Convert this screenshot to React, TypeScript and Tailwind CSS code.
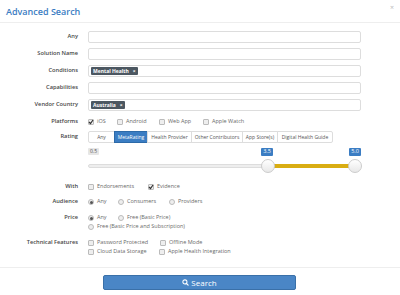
import React from "react";

const Label = ({ children }: { children: React.ReactNode }) => (
  <div className="w-[78px] shrink-0 text-right font-semibold text-[#474747] text-[5.7px]">{children}</div>
);

const Check = ({ checked = false }: { checked?: boolean }) => (
  <span className="relative inline-block w-[6px] h-[6px] border border-[#bbb] bg-[#eee] rounded-[1px] shrink-0">
    {checked && (
      <svg viewBox="0 0 6 6" className="absolute left-[-1px] top-[-1px] w-[6px] h-[6px]">
        <path d="M1 3 L2.5 4.5 L5 1" stroke="#333" strokeWidth="1.2" fill="none" />
      </svg>
    )}
  </span>
);

const Radio = ({ checked = false }: { checked?: boolean }) => (
  <span className="inline-flex items-center justify-center w-[6px] h-[6px] rounded-full border border-[#bbb] bg-[#eee] shrink-0">
    {checked && <span className="w-[3px] h-[3px] rounded-full bg-[#555]" />}
  </span>
);

const Opt = ({ children, w, box }: { children: React.ReactNode; w?: string; box: React.ReactNode }) => (
  <div className={`flex items-center gap-[3px] ${w ?? ""}`}>
    {box}
    <span className="text-[#6a6a6a]">{children}</span>
  </div>
);

const Input = ({ children }: { children?: React.ReactNode }) => (
  <div className="w-[273px] h-[12px] border border-[#ddd] rounded-[2px] bg-white flex items-center px-[2px]">
    {children}
  </div>
);

const Tag = ({ children }: { children: React.ReactNode }) => (
  <span className="inline-flex items-center h-[8px] px-[2px] bg-[#4c5761] text-white font-bold text-[5px] rounded-[1px] gap-[4px]">
    {children}
    <span className="text-[5px]">×</span>
  </span>
);

export default function App() {
  return (
    <div
      className="relative w-[400px] h-[295px] bg-white text-[5.5px] leading-none overflow-hidden"
      style={{ fontFamily: '"Open Sans", sans-serif' }}
    >
      <div className="h-[23px] border-b border-[#eee] flex items-center justify-between pl-[6px] pr-[6px]">
        <div className="text-[9px] font-semibold text-[#3a7cc2]">Advanced Search</div>
        <div className="self-start mt-[4px] text-[7px] text-[#bbb]">×</div>
      </div>
      <div className="pt-[8px] flex flex-col">
        {["Any", "Solution Name"].map((l) => (
          <div key={l} className="flex items-center gap-[10px] h-[12px] mb-[5px]">
            <Label>{l}</Label>
            <Input />
          </div>
        ))}
        <div className="flex items-center gap-[10px] h-[12px] mb-[5px]">
          <Label>Conditions</Label>
          <Input>
            <Tag>Mental Health</Tag>
          </Input>
        </div>
        <div className="flex items-center gap-[10px] h-[12px] mb-[5px]">
          <Label>Capabilities</Label>
          <Input />
        </div>
        <div className="flex items-center gap-[10px] h-[12px] mb-[5px]">
          <Label>Vendor Country</Label>
          <Input>
            <Tag>Australia</Tag>
          </Input>
        </div>
        <div className="flex items-center gap-[10px] h-[12px] mb-[3px]">
          <Label>Platforms</Label>
          <div className="flex items-center">
            <Opt w="w-[29px]" box={<Check checked />}>iOS</Opt>
            <Opt w="w-[42px]" box={<Check />}>Android</Opt>
            <Opt w="w-[44px]" box={<Check />}>Web App</Opt>
            <Opt box={<Check />}>Apple Watch</Opt>
          </div>
        </div>
        <div className="flex items-center gap-[10px] h-[12px]">
          <Label>Rating</Label>
          <div className="flex h-[12px] text-[5px] text-[#555]">
            {[
              ["Any", "w-[27px]"],
              ["MetaRating", "w-[34px]"],
              ["Health Provider", "w-[45px]"],
              ["Other Contributors", "w-[52px]"],
              ["App Store(s)", "w-[36px]"],
              ["Digital Health Guide", "w-[56px]"],
            ].map(([t, w], i) => (
              <div
                key={t}
                className={`${w} flex items-center justify-center border ${
                  i === 1 ? "bg-[#3b7dc3] border-[#2d6aa8] text-white" : "border-[#ddd] bg-white"
                } ${i > 0 ? "-ml-px" : ""} ${i === 0 ? "rounded-l-[2px]" : ""} ${i === 5 ? "rounded-r-[2px]" : ""}`}
              >
                {t}
              </div>
            ))}
          </div>
        </div>
        <div className="flex gap-[10px] h-[28px] mt-[5px]">
          <div className="w-[78px] shrink-0" />
          <div className="relative w-[273px] h-[28px]">
            <div className="absolute left-0 top-0 h-[7px] px-[2px] bg-[#e6e6e6] text-[#555] text-[5px] flex items-center rounded-[1px]">0.5</div>
            <div className="absolute left-[173px] top-0 h-[8px] w-[12px] bg-[#3b7dc3] text-white text-[5.5px] flex items-center justify-center rounded-[1px]">3.5</div>
            <div className="absolute left-[261px] top-0 h-[8px] w-[12px] bg-[#3b7dc3] text-white text-[5.5px] flex items-center justify-center rounded-[1px]">5.0</div>
            <div className="absolute left-0 right-0 top-[16px] h-[4px] rounded-full bg-[#eee] border border-[#ddd]" />
            <div className="absolute left-[180px] w-[87px] top-[16px] h-[4px] bg-[#d9ad12]" />
            <div className="absolute left-[173px] top-[11px] w-[14px] h-[14px] rounded-full bg-gradient-to-b from-white to-[#e8e8e8] border border-[#ccc]" />
            <div className="absolute left-[260px] top-[11px] w-[14px] h-[14px] rounded-full bg-gradient-to-b from-white to-[#e8e8e8] border border-[#ccc]" />
          </div>
        </div>
        <div className="flex items-center gap-[10px] h-[8px] mt-[7px]">
          <Label>With</Label>
          <div className="flex items-center">
            <Opt w="w-[60px]" box={<Check />}>Endorsements</Opt>
            <Opt box={<Check checked />}>Evidence</Opt>
          </div>
        </div>
        <div className="flex items-center gap-[10px] h-[8px] mt-[7px]">
          <Label>Audience</Label>
          <div className="flex items-center">
            <Opt w="w-[30px]" box={<Radio checked />}>Any</Opt>
            <Opt w="w-[51px]" box={<Radio />}>Consumers</Opt>
            <Opt box={<Radio />}>Providers</Opt>
          </div>
        </div>
        <div className="flex gap-[10px] mt-[9px]">
          <Label>Price</Label>
          <div className="flex flex-col gap-[3px]">
            <div className="flex items-center">
              <Opt w="w-[30px]" box={<Radio checked />}>Any</Opt>
              <Opt box={<Radio />}>Free (Basic Price)</Opt>
            </div>
            <Opt box={<Radio />}>Free (Basic Price and Subscription)</Opt>
          </div>
        </div>
        <div className="flex gap-[10px] mt-[10px]">
          <Label>Technical Features</Label>
          <div className="flex flex-col gap-[3px]">
            <div className="flex items-center">
              <Opt w="w-[72px]" box={<Check />}>Password Protected</Opt>
              <Opt box={<Check />}>Offline Mode</Opt>
            </div>
            <div className="flex items-center">
              <Opt w="w-[71px]" box={<Check />}>Cloud Data Storage</Opt>
              <Opt box={<Check />}>Apple Health Integration</Opt>
            </div>
          </div>
        </div>
      </div>
      <div className="absolute top-[267px] left-0 w-[400px] border-t border-[#eee]" />
      <div className="absolute top-[275px] left-[103px] w-[193px] h-[15px] rounded-[2px] bg-[#4a86c6] border border-[#3a70a8] flex items-center justify-center gap-[2px] text-white text-[8px]">
        <svg viewBox="0 0 12 12" className="w-[7px] h-[7px]">
          <circle cx="5" cy="5" r="3.5" stroke="white" strokeWidth="1.8" fill="none" />
          <path d="M7.5 7.5 L10.5 10.5" stroke="white" strokeWidth="2" strokeLinecap="round" />
        </svg>
        <span>Search</span>
      </div>
    </div>
  );
}
